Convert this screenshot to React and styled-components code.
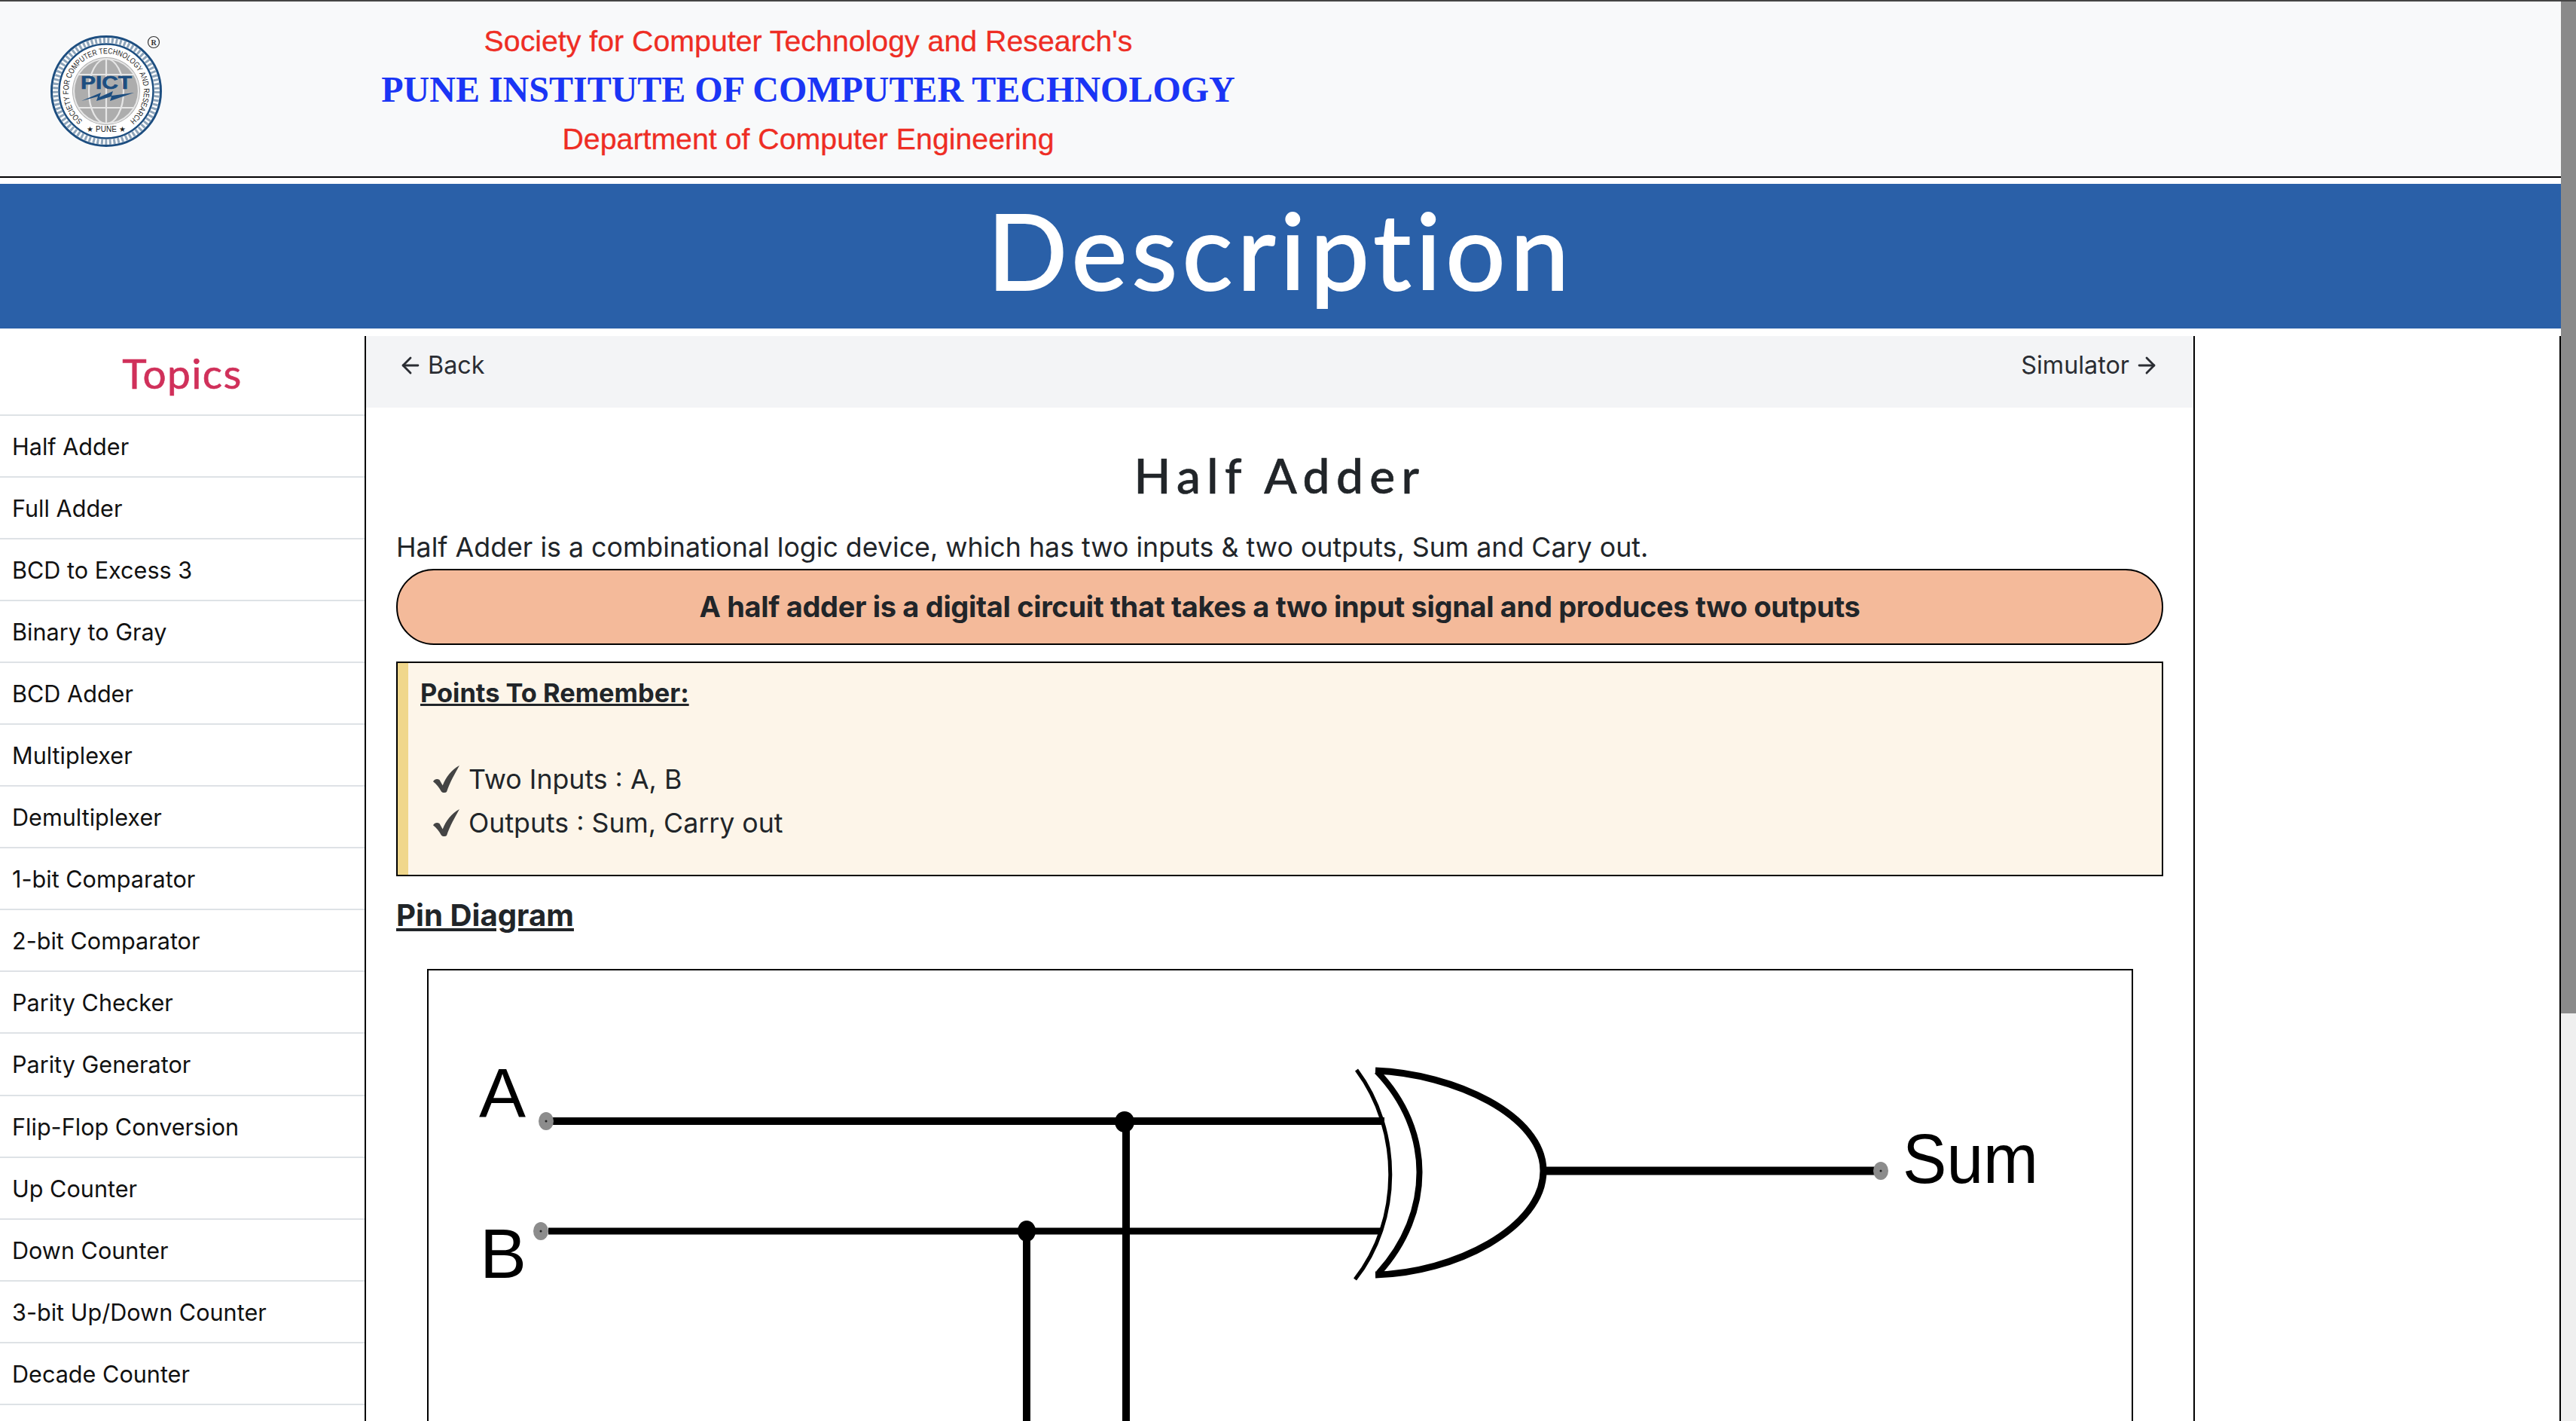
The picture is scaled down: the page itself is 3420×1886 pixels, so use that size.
import React from "react";
import styled, { createGlobalStyle } from "styled-components";
import { ArrowLeft, ArrowRight } from "lucide-react";

const Global = createGlobalStyle`
  html, body { margin: 0; padding: 0; height: 100%; overflow: hidden; background: #fff; }
  body { font-family: Inter, "Liberation Sans", sans-serif; color: #212529; }
  * { box-sizing: border-box; }
`;

const Shell = styled.div`
  width: 3420px; height: 1886px; display: flex; flex-direction: column; overflow: hidden;
  border-top: 2px solid #444;
`;
const Viewport = styled.div`display: flex; flex: 1; min-height: 0;`;
const Page = styled.div`width: 3400px; display: flex; flex-direction: column; min-height: 0;`;
const ScrollTrack = styled.div`width: 20px; background: #efefef;`;
const ScrollThumb = styled.div`height: 1343px; background: #8a8a8a;`;

const Header = styled.header`
  height: 234px; flex: none; background: #f8f9fa; border-bottom: 2px solid #000;
  display: flex; align-items: flex-start; position: relative;
`;
const LogoWrap = styled.div`width: 246px; padding: 44px 0 0 62px; flex: none;`;
const Institute = styled.div`
  width: 1654px; text-align: center; padding-top: 25px;
`;
const SocietyLine = styled.div`
  font-family: "Liberation Sans", Arial, sans-serif; font-size: 39.3px; line-height: 54px; color: #ee2d24;
  -webkit-text-stroke: 0.3px #ee2d24; height: ${p => p.$h}px;
`;
const CollegeLine = styled.div`
  font-family: "Liberation Serif", "Times New Roman", serif; font-weight: 700; font-size: 48px;
  line-height: 60px; height: 68px; color: #1a35f5; white-space: nowrap;
`;
const Spacer = styled.div`height: 8px; flex: none;`;
const Banner = styled.div`
  height: 192px; flex: none; background: #2a60a8; color: #fff; text-align: center;
  font-family: Lato, "Noto Sans", sans-serif; font-size: 140px; line-height: 174px; letter-spacing: 6.2px;
  -webkit-text-stroke: 2px #fff;
`;
const Main = styled.main`display: flex; flex: 1; min-height: 0; margin-top: 10px;`;
const Sidebar = styled.aside`width: 486px; flex: none; border-right: 2px solid #000; overflow: hidden;`;
const Topics = styled.h2`
  margin: 0; height: 104px; text-align: center; color: #d0305a; -webkit-text-stroke: 0.6px #d0305a;
  font-family: Lato, sans-serif; font-weight: 400; font-size: 55px; line-height: 98px; letter-spacing: 1.4px;
`;
const TopicItem = styled.div`
  height: 82.05px; border-top: 2px solid #dee2e6; padding-left: 16px; font-size: 30.6px; line-height: 82px; color: #111;
`;
const Content = styled.section`width: 2428px; flex: none; border-right: 2px solid #000; overflow: hidden;`;
const Nav = styled.nav`
  height: 95px; background: #f3f4f6; display: flex; justify-content: space-between; align-items: flex-start;
  padding: 20px 45px 0 42px; font-size: 32.3px; line-height: 38px;
`;
const NavLink = styled.span`display: inline-flex; align-items: center; gap: 6px; color: #2a2d33;`;
const Body = styled.div`padding: 0 40px;`;
const Title = styled.h1`
  margin: 0; padding-top: 50px; height: 157px; text-align: center; font-family: Lato, sans-serif;
  font-weight: 500; font-size: 64px; line-height: 80px; letter-spacing: 8.4px; color: #212529;
  -webkit-text-stroke: 0.6px #212529;
`;
const Intro = styled.p`margin: 0; padding-top: 4px; height: 57px; font-size: 35.76px; line-height: 48px; color: #212529;`;
const Pill = styled.div`
  height: 101px; border: 2px solid #000; border-radius: 50px; background: #f4ba9a;
  text-align: center; font-weight: 700; font-size: 38px; letter-spacing: -0.33px; line-height: 97px; margin-bottom: 22px;
`;
const Note = styled.div`
  height: 285px; border: 2px solid #000; background: #fdf5e9; display: flex;
`;
const NoteStripe = styled.div`width: 14px; background: #f0d78c; flex: none;`;
const NoteBody = styled.div`padding: 18px 0 0 16px;`;
const NoteHeading = styled.div`
  font-weight: 700; font-size: 34.4px; line-height: 44px; text-decoration: underline; height: 107px;
`;
const CheckRow = styled.div`
  display: flex; align-items: center; gap: 11px; height: 58px; padding-left: 17px; font-size: 35.7px;
`;
const PinHeading = styled.h3`
  margin: 22px 0 0; height: 101px; font-weight: 700; font-size: 40.2px; line-height: 60px; text-decoration: underline;
`;
const Frame = styled.div`
  margin-left: 41px; width: 2265px; height: 900px; border: 2px solid #000; overflow: hidden;
`;
const Diagram = styled.svg`display: block;`;
const RightGutter = styled.div`flex: 1; border-right: 2px solid #000;`;

const topics = ["Half Adder","Full Adder","BCD to Excess 3","Binary to Gray","BCD Adder","Multiplexer","Demultiplexer","1-bit Comparator","2-bit Comparator","Parity Checker","Parity Generator","Flip-Flop Conversion","Up Counter","Down Counter","3-bit Up/Down Counter","Decade Counter",""];

const Logo = () => (
  <svg width="160" height="152" viewBox="62 46 160 152">
    <defs>
      <path id="ringPath" d="M 110 160.4 A 50 50 0 1 1 172 160.4" />
    </defs>
    <circle cx="141" cy="121" r="72.5" fill="#fff" stroke="#1d4e80" strokeWidth="3" />
    <circle cx="141" cy="121" r="67.5" fill="none" stroke="#8fa5ba" strokeWidth="7" strokeDasharray="3 2.5" />
    <circle cx="141" cy="121" r="62.5" fill="#fff" stroke="#1d4e80" strokeWidth="2.5" />
    <circle cx="141" cy="121" r="45" fill="#adadad" />
    <g fill="none" stroke="#e6e6e6" strokeWidth="2.2">
      <circle cx="141" cy="121" r="43" />
      <ellipse cx="141" cy="121" rx="23" ry="43" />
      <path d="M141 78V164M104 99H178M104 143H178" />
    </g>
    <text fontFamily="Liberation Sans" fontSize="10.5" fill="#222">
      <textPath href="#ringPath" startOffset="50%" textAnchor="middle" textLength="246" lengthAdjust="spacingAndGlyphs">SOCIETY FOR COMPUTER TECHNOLOGY AND RESEARCH</textPath>
    </text>
    <text x="141" y="175" fontFamily="Liberation Sans" fontSize="10" fill="#222" textAnchor="middle">★ PUNE ★</text>
    <text x="141" y="118" fontFamily="Liberation Sans" fontWeight="700" fontSize="24" fill="#1d4e80" stroke="#1d4e80" strokeWidth="0.6" textAnchor="middle" textLength="68" lengthAdjust="spacingAndGlyphs">PICT</text>
    <path d="M108 134L134 123 132 129 150 121 148 127 178 123 146 134 148 128 128 134 130 128Z" fill="#1d4e80" />
    <circle cx="204" cy="56" r="7.5" fill="#f8f9fa" stroke="#333" strokeWidth="1.2" />
    <text x="204" y="60" fontFamily="Liberation Serif" fontWeight="700" fontSize="10" fill="#333" textAnchor="middle">R</text>
  </svg>
);

const Check = () => (
  <svg width="36" height="36" viewBox="0 0 34 34" fill="#444">
    <path d="M0 20 C2 17 5 16 8 18 L12 25 C16 15 23 5 33 0 C28 9 21 21 17 33 C14 35 11 34 10 32 C8 28 4 23 0 20 Z" />
  </svg>
);

const Pin = ({ x, y }) => (
  <g>
    <ellipse cx={x} cy={y} rx="10" ry="12" fill="#8c8c8c" />
    <circle cx={x} cy={y} r="1.5" fill="#222" />
  </g>
);

const HalfAdderDiagram = () => (
  <Diagram width="2261" height="896" viewBox="569 1288 2261 896">
    <g fontFamily="Liberation Sans" fontSize="93" fill="#000">
      <text x="636" y="1483">A</text>
      <text x="637" y="1696">B</text>
      <text x="2526" y="1570" textLength="180" lengthAdjust="spacingAndGlyphs">Sum</text>
    </g>
    <g stroke="#000" fill="none">
      <path d="M733 1488H1838" strokeWidth="10" />
      <path d="M728 1634H1834" strokeWidth="9" />
      <path d="M1495 1488V2184M1363 1634V2184" strokeWidth="10" />
      <path d="M2049 1554H2492" strokeWidth="11" />
      <path d="M1801 1420C1861 1500 1861 1620 1799 1698" strokeWidth="5" />
      <path d="M1828 1422C1903 1500 1903 1610 1830 1690" strokeWidth="8" />
      <path d="M1826 1421C1930 1425 2049 1480 2049 1554C2049 1630 1930 1690 1826 1692" strokeWidth="9" />
    </g>
    <ellipse cx="1493" cy="1489" rx="13" ry="14" fill="#000" />
    <ellipse cx="1363" cy="1634" rx="12" ry="14" fill="#000" />
    <Pin x={725} y={1488} />
    <Pin x={718} y={1634} />
    <Pin x={2497} y={1554} />
  </Diagram>
);

export default function App() {
  return (
    <>
      <Global />
      <Shell>
        <Viewport>
          <Page>
            <Header>
              <LogoWrap><Logo /></LogoWrap>
              <Institute>
                <SocietyLine $h={62}>Society for Computer Technology and Research's</SocietyLine>
                <CollegeLine>PUNE INSTITUTE OF COMPUTER TECHNOLOGY</CollegeLine>
                <SocietyLine $h={54}>Department of Computer Engineering</SocietyLine>
              </Institute>
            </Header>
            <Spacer />
            <Banner>Description</Banner>
            <Main>
              <Sidebar>
                <Topics>Topics</Topics>
                {topics.map((t, i) => <TopicItem key={i}>{t}</TopicItem>)}
              </Sidebar>
              <Content>
                <Nav>
                  <NavLink><ArrowLeft size={34} strokeWidth={2} />Back</NavLink>
                  <NavLink>Simulator<ArrowRight size={34} strokeWidth={2} /></NavLink>
                </Nav>
                <Body>
                  <Title>Half Adder</Title>
                  <Intro>Half Adder is a combinational logic device, which has two inputs &amp; two outputs, Sum and Cary out.</Intro>
                  <Pill>A half adder is a digital circuit that takes a two input signal and produces two outputs</Pill>
                  <Note>
                    <NoteStripe />
                    <NoteBody>
                      <NoteHeading>Points To Remember:</NoteHeading>
                      <CheckRow><Check />Two Inputs : A, B</CheckRow>
                      <CheckRow><Check />Outputs : Sum, Carry out</CheckRow>
                    </NoteBody>
                  </Note>
                  <PinHeading>Pin Diagram</PinHeading>
                  <Frame><HalfAdderDiagram /></Frame>
                </Body>
              </Content>
              <RightGutter />
            </Main>
          </Page>
          <ScrollTrack><ScrollThumb /></ScrollTrack>
        </Viewport>
      </Shell>
    </>
  );
}
